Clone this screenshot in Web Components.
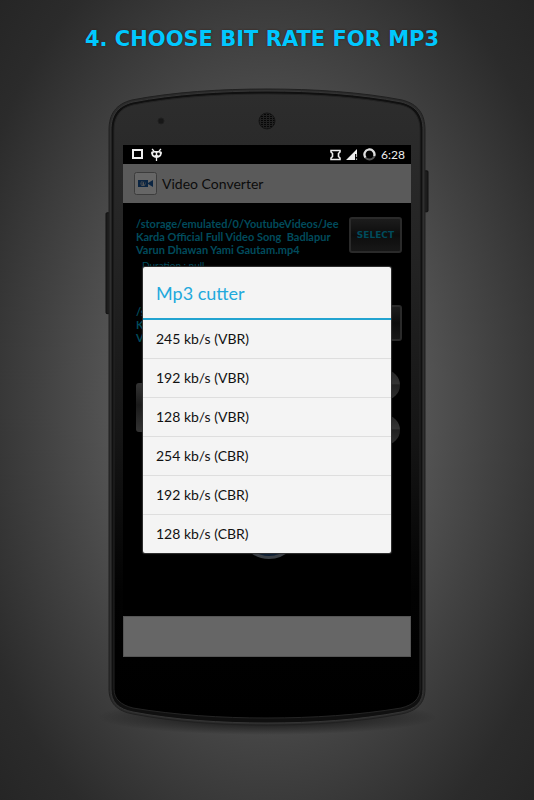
<!DOCTYPE html>
<html lang="en">
<head>
<meta charset="utf-8">
<meta name="viewport" content="width=device-width, initial-scale=1">
<title>Video Converter</title>
<style>
  body {
    margin: 0;
    min-height: 100vh;
    font-family: Lato, "Liberation Sans", sans-serif;
    background: radial-gradient(ellipse 330px 520px at 50% 50%, #646464 0%, #5a5a5a 40%, #424242 68%, #2b2b2b 96%, #1f1f1f 130%) #1f1f1f;
  }
</style>
</head>
<body>
<promo-page>
  <span slot="title">4. CHOOSE BIT RATE FOR MP3</span>
  <phone-frame>
    <status-bar time="6:28"></status-bar>
    <app-window>
      <app-bar>Video Converter</app-bar>
      <converter-view></converter-view>
      <choice-dialog>
        <span slot="title">Mp3 cutter</span>
        <choice-item>245 kb/s (VBR)</choice-item>
        <choice-item>192 kb/s (VBR)</choice-item>
        <choice-item>128 kb/s (VBR)</choice-item>
        <choice-item>254 kb/s (CBR)</choice-item>
        <choice-item>192 kb/s (CBR)</choice-item>
        <choice-item>128 kb/s (CBR)</choice-item>
      </choice-dialog>
    </app-window>
  </phone-frame>
</promo-page>

<script>
class BaseElement extends HTMLElement {
  connectedCallback() {
    if (this.shadowRoot) return;
    this.attachShadow({ mode: 'open' });
    this.shadowRoot.innerHTML = this.render();
  }
}

class PromoPage extends BaseElement {
  render() {
    return `
      <style>
        :host {
          display: flex;
          flex-direction: column;
          align-items: center;
          gap: 36px;
          padding: 27px 0 72px;
        }
        h1 {
          margin: 0;
          padding-right: 10px;
          font: bold 21px/25px "DejaVu Sans", sans-serif;
          color: #00c8ff;
          text-align: center;
          text-shadow: 0 0 2px #3a1a10;
        }
      </style>
      <h1><slot name="title"></slot></h1>
      <slot></slot>
    `;
  }
}

class PhoneFrame extends BaseElement {
  render() {
    return `
      <style>
        :host {
          display: block;
          position: relative;
          box-sizing: border-box;
          width: 100%;
          max-width: 324px;
          padding: 57px 18px 70px;
        }
        svg {
          position: absolute;
          inset: 0;
          width: 100%;
          height: 100%;
          overflow: visible;
        }
        .screen {
          position: relative;
          display: flex;
          flex-direction: column;
          background: #000;
        }
      </style>
      <svg viewBox="0 0 324 640" preserveAspectRatio="none" aria-hidden="true">
        <defs>
          <linearGradient id="face" x1="0" y1="0" x2="0" y2="1">
            <stop offset="0" stop-color="#2d2d2d"/>
            <stop offset=".25" stop-color="#242424"/>
            <stop offset=".55" stop-color="#151515"/>
            <stop offset=".8" stop-color="#020202"/>
            <stop offset="1" stop-color="#000"/>
          </linearGradient>
          <radialGradient id="shadow">
            <stop offset="0" stop-color="#000" stop-opacity=".9"/>
            <stop offset="1" stop-color="#000" stop-opacity="0"/>
          </radialGradient>
          <pattern id="mesh" width="3" height="2" patternUnits="userSpaceOnUse">
            <rect width="3" height="2" fill="#222"/>
            <rect width="2" height="1" fill="#060606"/>
          </pattern>
        </defs>
        <ellipse cx="162" cy="630" rx="170" ry="18" fill="url(#shadow)"/>
        <rect x="1" y="125" width="5" height="101" rx="1" fill="#1c1c1c" stroke="#111"/>
        <rect x="318" y="83" width="5" height="41" rx="1" fill="#1c1c1c" stroke="#111"/>
        <path d="M4 42C4 26 11 16 27 12C68 4 116 1 162 1S256 4 297 12C313 16 320 26 320 42V602C320 616 312 624 296 627C254 635 208 638 162 638S70 635 28 627C12 624 4 616 4 602Z" fill="#2b2b2b" stroke="#202020"/>
        <path d="M6 42C6 28 12 18 28 14C69 6 116 3 162 3S255 6 296 14C312 18 318 28 318 42V602C318 615 311 622 296 625C254 633 208 636 162 636S70 633 28 625C13 622 6 615 6 602Z" fill="#101010" stroke="#353535"/>
        <path d="M9 42C9 29 15 20 28 17C69 9 116 6 162 6S255 9 296 17C309 20 315 29 315 42V602C315 612 308 618 296 621C254 628 208 631 162 631S70 628 28 621C16 618 9 612 9 602Z" fill="url(#face)" stroke="#242424"/>
        <circle cx="56" cy="33" r="3" fill="#171717" stroke="#202020"/>
        <circle cx="162" cy="33" r="8" fill="url(#mesh)" stroke="#151515"/>
      </svg>
      <div class="screen"><slot></slot></div>
    `;
  }
}

class StatusBar extends BaseElement {
  render() {
    return `
      <style>
        :host {
          display: flex;
          align-items: center;
          gap: 5px;
          height: 19px;
          padding: 0 6px 0 8px;
          color: #eee;
          font-size: 12px;
        }
        .left {
          display: flex;
          flex: 1;
          gap: 6px;
        }
        svg { flex: none; }
      </style>
      <div class="left">
        <svg width="13" height="12" viewBox="0 0 13 12"><rect x="2" y="2" width="9" height="8" fill="none" stroke="#eee" stroke-width="2"/></svg>
        <svg width="13" height="13" viewBox="0 0 13 13">
          <path d="M2 1L4 3M11 1L9 3M6.500 9V13" stroke="#eee" stroke-width="1.300"/>
          <path d="M1 5Q1 3 4 3H9Q12 3 12 5L11 8Q9 10 6.500 10T2 8Z" fill="#eee"/>
          <circle cx="4.500" cy="6" r="1.400"/><circle cx="8.500" cy="6" r="1.400"/>
        </svg>
      </div>
      <svg width="11" height="12" viewBox="0 0 11 12">
        <path d="M1 3V1.500H10V3L8.500 4.500V7.500L10 9V10.500H1V9L2.500 7.500V4.500Z" fill="none" stroke="#eee" stroke-width="1.600"/>
      </svg>
      <svg width="12" height="12" viewBox="0 0 12 12"><path d="M0 11L11 0V5H9V11Z" fill="#eee"/><path d="M10.500 5V8M10.500 9.500V11" stroke="#aaa" stroke-width="1.200"/></svg>
      <svg width="13" height="13" viewBox="0 0 13 13">
        <circle cx="6.500" cy="6.500" r="5" fill="none" stroke="#555" stroke-width="2.200"/>
        <path d="M2.500 9.500A5 5 0 1 1 11.200 8" fill="none" stroke="#ddd" stroke-width="2.200"/>
      </svg>
      <time>${this.getAttribute('time')}</time>
    `;
  }
}

class AppWindow extends BaseElement {
  render() {
    return `
      <style>
        :host {
          display: flex;
          flex-direction: column;
          position: relative;
        }
        footer {
          height: 41px;
          background: #666;
          border: 1px solid #555;
          box-sizing: border-box;
        }
      </style>
      <slot></slot>
      <footer></footer>
    `;
  }
}

class AppBar extends BaseElement {
  render() {
    return `
      <style>
        :host {
          display: flex;
          align-items: center;
          gap: 5px;
          height: 39px;
          padding: 0 11px;
          background: #5a5a5a;
          color: #0c0c0c;
        }
        h2 {
          margin: 0;
          font-size: 14px;
          font-weight: 400;
        }
      </style>
      <svg width="23" height="23" viewBox="0 0 23 23" aria-hidden="true">
        <rect x=".5" y=".5" width="22" height="22" rx="2" fill="#666" stroke="#3c3c3c"/>
        <path d="M4 8H14V15H4Z" fill="#0b2542"/>
        <path d="M14 11L19 8V15L14 12Z" fill="#0b2542"/>
        <circle cx="9" cy="11.500" r="2.500" fill="#555"/>
        <path d="M8 13V10L10.500 9.500V12.500" fill="none" stroke="#0b2542"/>
      </svg>
      <h2><slot></slot></h2>
    `;
  }
}

class ConverterView extends BaseElement {
  render() {
    const path = '/storage/emulated/0/YoutubeVideos/Jee Karda Official Full Video Song&nbsp; Badlapur Varun Dhawan Yami Gautam.mp4';
    return `
      <style>
        :host {
          display: flex;
          flex-direction: column;
          box-sizing: border-box;
          height: 413px;
          padding: 14px 9px 0 13px;
          color: #004b5c;
          font-size: 11px;
          line-height: 13px;
        }
        .row {
          display: grid;
          grid-template-columns: 1fr 53px;
          gap: 6px;
          height: 88px;
        }
        .row.save { height: 64px; }
        p {
          margin: 0;
          font-weight: 700;
        }
        .duration {
          padding: 3px 6px;
          font-size: 10px;
          font-weight: 400;
        }
        button {
          height: 36px;
          padding: 0;
          border: 2px solid #2a2a2a;
          border-radius: 3px;
          background: linear-gradient(#1c1c1c, #0d0d0d 50%, #171717);
          color: #004b5c;
          font: bold 9px "DejaVu Sans", sans-serif;
        }
        .tools {
          display: flex;
          justify-content: space-between;
          align-items: center;
          margin-right: 2px;
          height: 76px;
        }
        .tools .panel {
          width: 60px;
          height: 49px;
          border: 0;
          background: linear-gradient(#333, #1a1a1a 45%, #333);
        }
        .rounds {
          display: grid;
          gap: 15px;
        }
        .rounds button {
          width: 30px;
          height: 30px;
          border: 0;
          border-radius: 50%;
          background: linear-gradient(#252525, #343434 45%, #202020 50%, #303030);
        }
        .play {
          align-self: center;
          width: 60px;
          height: 60px;
          margin-top: 54px;
          border: 3px solid #3a3f45;
          border-radius: 50%;
          background: #0b1d33;
        }
      </style>
      <div class="row">
        <div><p>${path}</p><div class="duration">Duration : null</div></div>
        <button>SELECT</button>
      </div>
      <div class="row save">
        <p>${path}</p>
        <button>SAVE</button>
      </div>
      <div class="tools">
        <button class="panel" aria-label="Format"></button>
        <div class="rounds">
          <button aria-label="Forward"></button>
          <button aria-label="Back"></button>
        </div>
      </div>
      <button class="play" aria-label="Convert"></button>
    `;
  }
}

class ChoiceDialog extends BaseElement {
  render() {
    return `
      <style>
        :host {
          position: absolute;
          inset: 0;
          display: flex;
          align-items: center;
          padding: 0 20px 1px;
        }
        .dialog {
          flex: 1;
          overflow: hidden;
          border-radius: 2px;
          background: #f4f4f4;
          box-shadow: 0 0 1px 1px #333;
        }
        h2 {
          margin: 0;
          padding: 2px 13px 0;
          border-bottom: 2px solid #22a3d0;
          color: #22a9dc;
          font-size: 18px;
          font-weight: 400;
          line-height: 49px;
        }
      </style>
      <div class="dialog" role="dialog" aria-labelledby="title">
        <h2 id="title"><slot name="title"></slot></h2>
        <slot></slot>
      </div>
    `;
  }
}

class ChoiceItem extends BaseElement {
  render() {
    return `
      <style>
        :host {
          display: block;
          border-bottom: 1px solid #dedede;
        }
        :host(:last-child) { border-bottom: 0; }
        button {
          display: block;
          width: 100%;
          padding: 0 13px;
          border: 0;
          background: none;
          color: #111;
          font: inherit;
          font-size: 14px;
          line-height: 38px;
          text-align: left;
          cursor: pointer;
        }
      </style>
      <button><slot></slot></button>
    `;
  }
}

customElements.define('promo-page', PromoPage);
customElements.define('phone-frame', PhoneFrame);
customElements.define('status-bar', StatusBar);
customElements.define('app-window', AppWindow);
customElements.define('app-bar', AppBar);
customElements.define('converter-view', ConverterView);
customElements.define('choice-dialog', ChoiceDialog);
customElements.define('choice-item', ChoiceItem);
</script>
</body>
</html>
